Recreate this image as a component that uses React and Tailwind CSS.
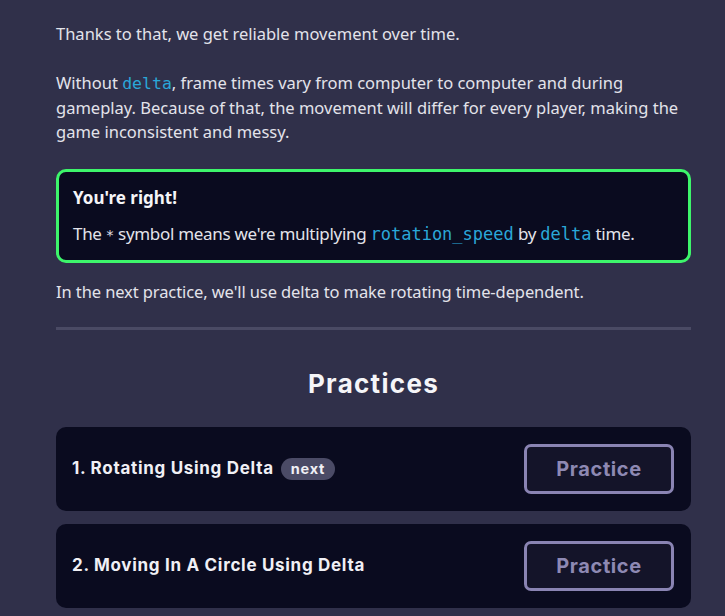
export default function App() {
  const body = { fontFamily: '"Noto Sans", "Open Sans", sans-serif' };
  const head = { fontFamily: 'Inter, "Noto Sans", sans-serif' };
  const mono = { fontFamily: '"DejaVu Sans Mono", "Liberation Mono", monospace' };
  const Practice = ({ title, badge }) => (
    <div className="flex items-center justify-between rounded-[10px] bg-[#0a0b1f] pl-4 pr-[17px] h-[84px]">
      <div className="flex items-center gap-[7px]">
        <span className="text-[17px] font-bold text-[#f0f0f5] tracking-[0.7px]" style={head}>{title}</span>
        {badge && (
          <span className="rounded-full bg-[#4b4b66] px-[10px] h-[22px] flex items-center text-[14.5px] font-bold text-[#f0f0f5] tracking-[0.8px]" style={head}>{badge}</span>
        )}
      </div>
      <button className="w-[150px] h-[50px] rounded-[7px] border-[3px] border-[#8a84b3] bg-[#141429] text-[20px] font-bold text-[#8e89b3] tracking-[0.6px]" style={head}>Practice</button>
    </div>
  );
  return (
    <div className="min-h-[616px] w-[725px] bg-[#30304a] text-[#e3e3ea]" style={body}>
      <div className="ml-[56px] w-[635px] pt-[22px]">
        <p className="text-[16.5px] leading-[24px]">Thanks to that, we get reliable movement over time.</p>
        <p className="mt-[25px] text-[16.5px] leading-[24px]">
          Without <span className="text-[#2aa7d8]" style={mono}>delta</span>, frame times vary from computer to computer and during gameplay. Because of that, the movement will differ for every player, making the game inconsistent and messy.
        </p>
        <div className="mt-[25px] rounded-[10px] border-[3px] border-[#3df56b] bg-[#0a0b1f] px-[14px] pt-[14px] pb-[13px]">
          <div className="text-[17px] font-bold leading-[24px] text-[#f5f5f8]">You're right!</div>
          <div className="mt-[12px] text-[17px] leading-[24px] text-[#e3e3ea] tracking-[-0.3px]">
            The <span style={mono} className="text-[14px]">*</span> symbol means we're multiplying <span className="text-[#2aa7d8] tracking-normal" style={mono}>rotation_speed</span> by <span className="text-[#2aa7d8] tracking-normal" style={mono}>delta</span> time.
          </div>
        </div>
        <p className="mt-[17px] text-[16.5px] leading-[24px] tracking-[-0.1px]">In the next practice, we'll use delta to make rotating time-dependent.</p>
        <div className="mt-[23px] h-[3px] bg-[#4a4a64]" />
        <h2 className="mt-[38px] text-center text-[26px] font-bold leading-[32px] text-[#f5f5f8] tracking-[1.3px]" style={head}>Practices</h2>
        <div className="mt-[27px] flex flex-col gap-[13px]">
          <Practice title="1. Rotating Using Delta" badge="next" />
          <Practice title="2. Moving In A Circle Using Delta" />
        </div>
      </div>
    </div>
  );
}
